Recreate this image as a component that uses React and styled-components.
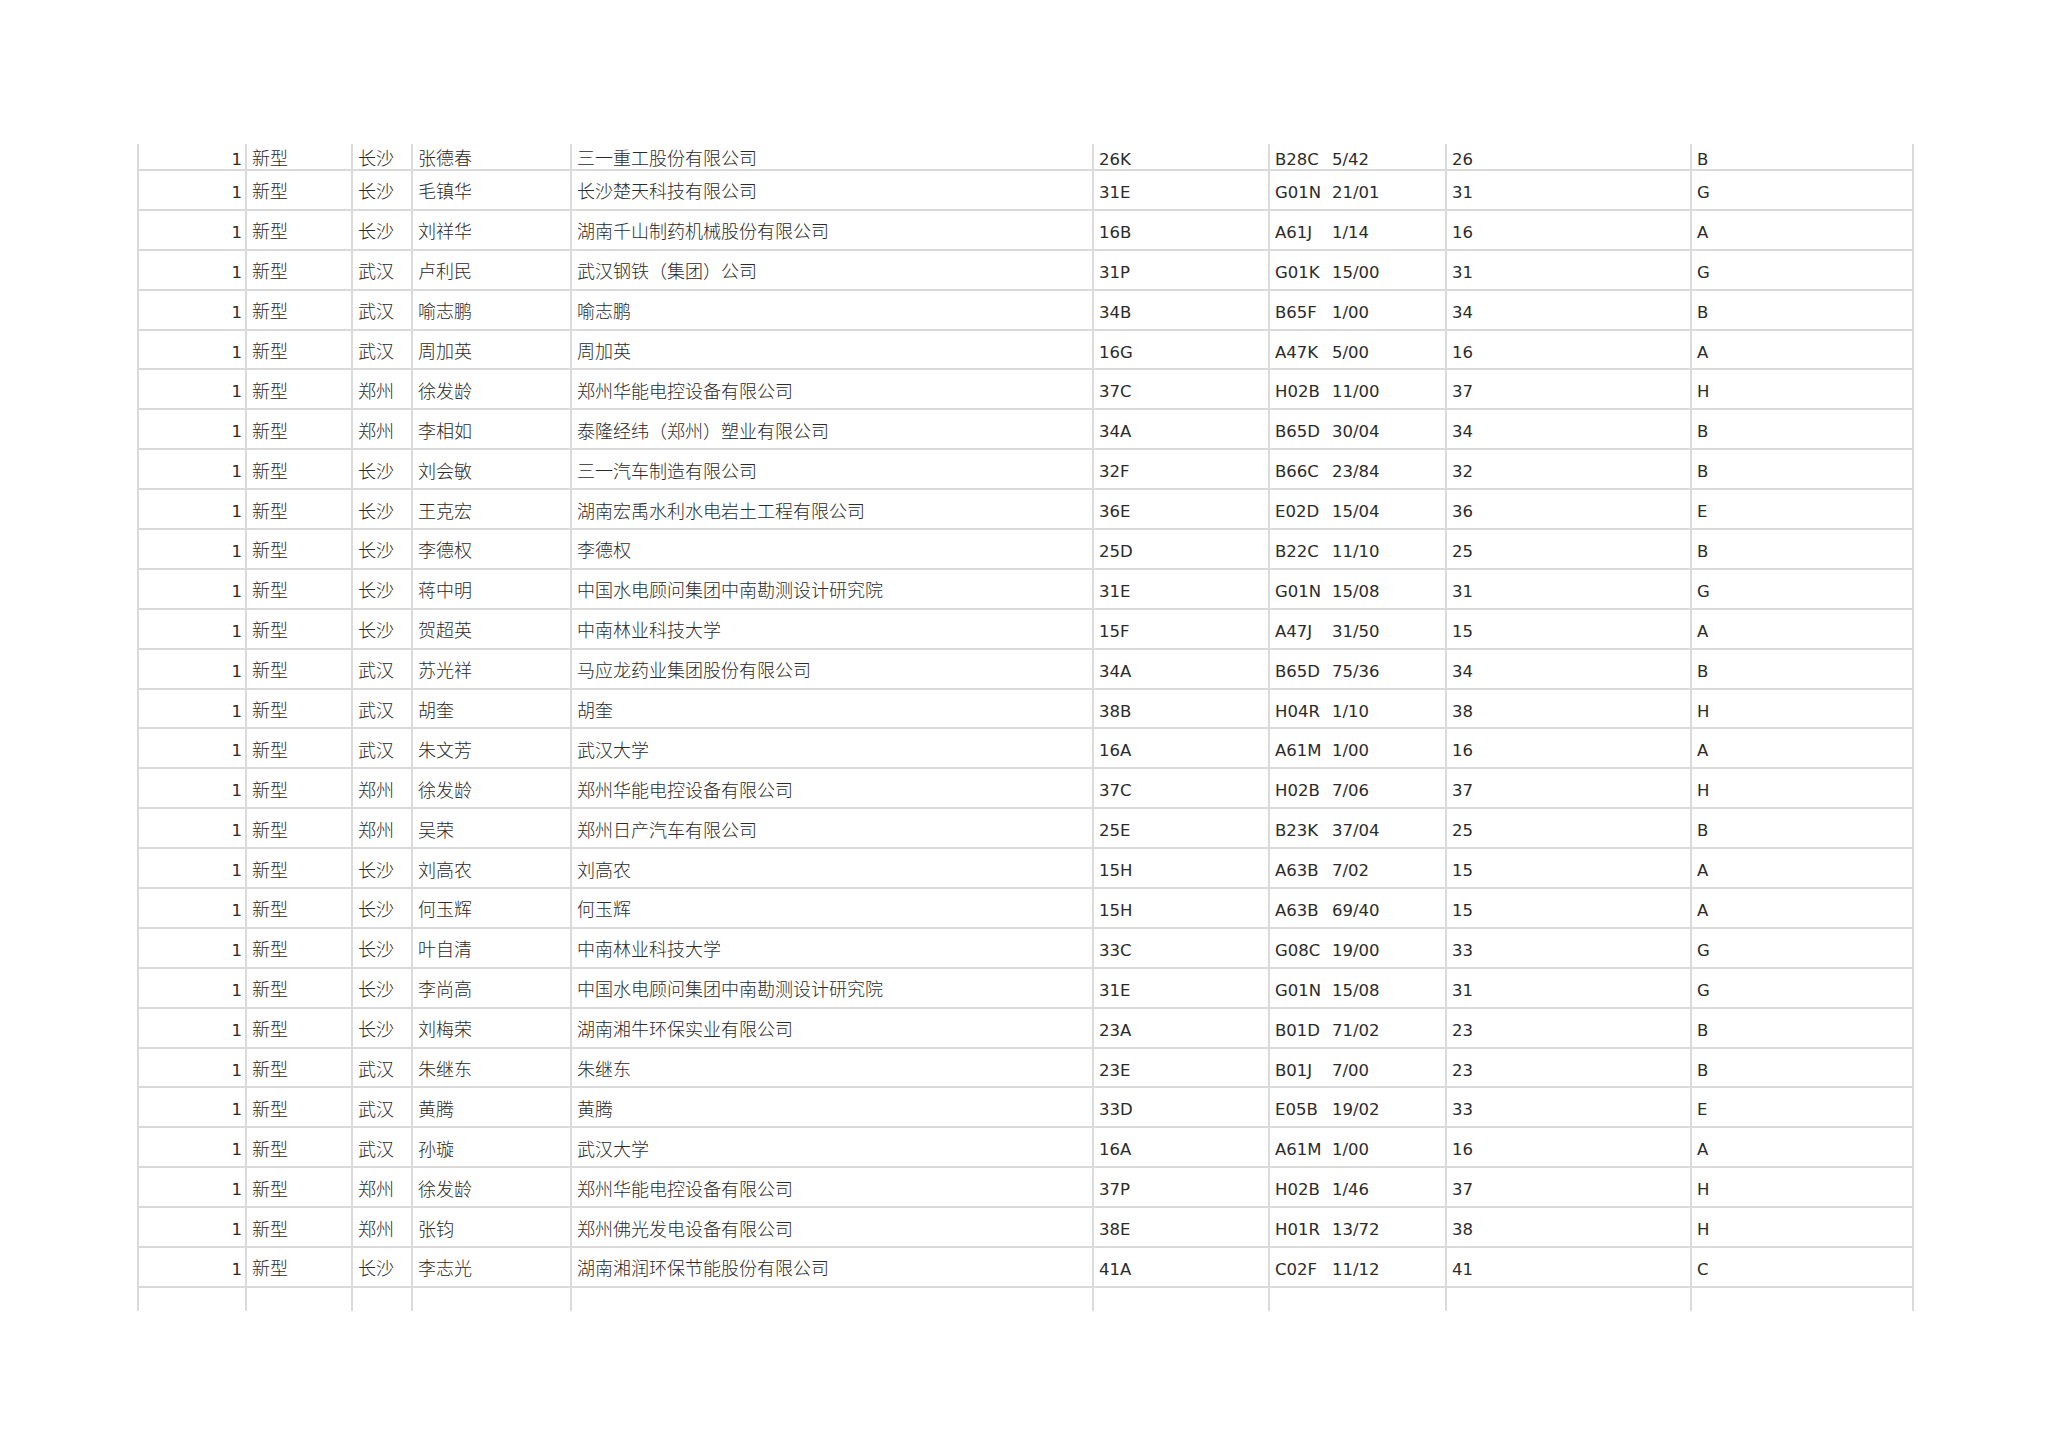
import styled, { createGlobalStyle, css } from 'styled-components'

const GlobalStyle = createGlobalStyle`
  html, body {
    margin: 0;
    padding: 0;
    background: #ffffff;
  }
  * {
    box-sizing: border-box;
  }
`

// column widths measured from the sheet, border included
const COLS = [
  { w: 108, font: 'lat', align: 'right' },
  { w: 106, font: 'cjk' },
  { w: 60, font: 'cjk' },
  { w: 159, font: 'cjk' },
  { w: 522, font: 'cjk' },
  { w: 176, font: 'lat' },
  { w: 177, font: 'lat', ipc: true },
  { w: 245, font: 'lat' },
  { w: 222, font: 'lat' },
]

const ROWS = [
  ['长沙', '张德春', '三一重工股份有限公司', '26K', ['B28C', '5/42'], '26', 'B'],
  ['长沙', '毛镇华', '长沙楚天科技有限公司', '31E', ['G01N', '21/01'], '31', 'G'],
  ['长沙', '刘祥华', '湖南千山制药机械股份有限公司', '16B', ['A61J', '1/14'], '16', 'A'],
  ['武汉', '卢利民', '武汉钢铁（集团）公司', '31P', ['G01K', '15/00'], '31', 'G'],
  ['武汉', '喻志鹏', '喻志鹏', '34B', ['B65F', '1/00'], '34', 'B'],
  ['武汉', '周加英', '周加英', '16G', ['A47K', '5/00'], '16', 'A'],
  ['郑州', '徐发龄', '郑州华能电控设备有限公司', '37C', ['H02B', '11/00'], '37', 'H'],
  ['郑州', '李相如', '泰隆经纬（郑州）塑业有限公司', '34A', ['B65D', '30/04'], '34', 'B'],
  ['长沙', '刘会敏', '三一汽车制造有限公司', '32F', ['B66C', '23/84'], '32', 'B'],
  ['长沙', '王克宏', '湖南宏禹水利水电岩土工程有限公司', '36E', ['E02D', '15/04'], '36', 'E'],
  ['长沙', '李德权', '李德权', '25D', ['B22C', '11/10'], '25', 'B'],
  ['长沙', '蒋中明', '中国水电顾问集团中南勘测设计研究院', '31E', ['G01N', '15/08'], '31', 'G'],
  ['长沙', '贺超英', '中南林业科技大学', '15F', ['A47J', '31/50'], '15', 'A'],
  ['武汉', '苏光祥', '马应龙药业集团股份有限公司', '34A', ['B65D', '75/36'], '34', 'B'],
  ['武汉', '胡奎', '胡奎', '38B', ['H04R', '1/10'], '38', 'H'],
  ['武汉', '朱文芳', '武汉大学', '16A', ['A61M', '1/00'], '16', 'A'],
  ['郑州', '徐发龄', '郑州华能电控设备有限公司', '37C', ['H02B', '7/06'], '37', 'H'],
  ['郑州', '吴荣', '郑州日产汽车有限公司', '25E', ['B23K', '37/04'], '25', 'B'],
  ['长沙', '刘高农', '刘高农', '15H', ['A63B', '7/02'], '15', 'A'],
  ['长沙', '何玉辉', '何玉辉', '15H', ['A63B', '69/40'], '15', 'A'],
  ['长沙', '叶自清', '中南林业科技大学', '33C', ['G08C', '19/00'], '33', 'G'],
  ['长沙', '李尚高', '中国水电顾问集团中南勘测设计研究院', '31E', ['G01N', '15/08'], '31', 'G'],
  ['长沙', '刘梅荣', '湖南湘牛环保实业有限公司', '23A', ['B01D', '71/02'], '23', 'B'],
  ['武汉', '朱继东', '朱继东', '23E', ['B01J', '7/00'], '23', 'B'],
  ['武汉', '黄腾', '黄腾', '33D', ['E05B', '19/02'], '33', 'E'],
  ['武汉', '孙璇', '武汉大学', '16A', ['A61M', '1/00'], '16', 'A'],
  ['郑州', '徐发龄', '郑州华能电控设备有限公司', '37P', ['H02B', '1/46'], '37', 'H'],
  ['郑州', '张钧', '郑州佛光发电设备有限公司', '38E', ['H01R', '13/72'], '38', 'H'],
  ['长沙', '李志光', '湖南湘润环保节能股份有限公司', '41A', ['C02F', '11/12'], '41', 'C'],
]

export default function App() {
  const gridCols = COLS.map(c => `${c.w}px`).join(' ')

  function renderCell(value, col, i) {
    if (col.ipc && Array.isArray(value)) {
      return (
        <Cell key={i} $font={col.font} $align={col.align}>
          <IpcClass>{value[0]}</IpcClass>
          <span>{value[1]}</span>
        </Cell>
      )
    }
    return (
      <Cell key={i} $font={col.font} $align={col.align}>
        {value}
      </Cell>
    )
  }

  return (
    <Page>
      <GlobalStyle />
      <Sheet>
        {ROWS.map((row, r) => {
          const values = ['1', '新型', ...row]
          return (
            <Row key={r} $cols={gridCols} $first={r === 0}>
              {values.map((v, i) => renderCell(v, COLS[i], i))}
            </Row>
          )
        })}
        <Row $cols={gridCols} $tail>
          {COLS.map((col, i) => (
            <Cell key={i} $font={col.font} />
          ))}
        </Row>
      </Sheet>
    </Page>
  )
}

const Page = styled.div`
  min-height: 1447px;
  padding: 144px 0 0 137px;
  background: #ffffff;
`

const Sheet = styled.div`
  display: flex;
  flex-direction: column;
  width: max-content;
  border-left: 2px solid #dadada;
`

const Row = styled.div`
  display: grid;
  grid-template-columns: ${props => props.$cols};
  height: 39.9px;
  border-bottom: 2px solid #dadada;

  ${props => props.$first && css`
    height: 27px;
  `}

  ${props => props.$tail && css`
    height: 23px;
    border-bottom: none;
  `}
`

const Cell = styled.div`
  display: flex;
  align-items: center;
  justify-content: ${props => (props.$align === 'right' ? 'flex-end' : 'flex-start')};
  padding: 0 ${props => (props.$align === 'right' ? '3px' : '5px')} 0 5px;
  border-right: 2px solid #dadada;
  white-space: nowrap;
  overflow: hidden;
  line-height: 20px;

  ${props => props.$font === 'cjk' ? css`
    font-family: "Noto Sans CJK SC", "Noto Sans", sans-serif;
    font-size: 18px;
    font-weight: 300;
    color: #2a2a2a;
    padding-top: 1px;
  ` : css`
    font-family: "DejaVu Sans", Verdana, sans-serif;
    font-size: 16.5px;
    color: #2b2b2b;
    padding-top: 6px;
  `}
`

const IpcClass = styled.span`
  display: inline-block;
  width: 57px;
`
